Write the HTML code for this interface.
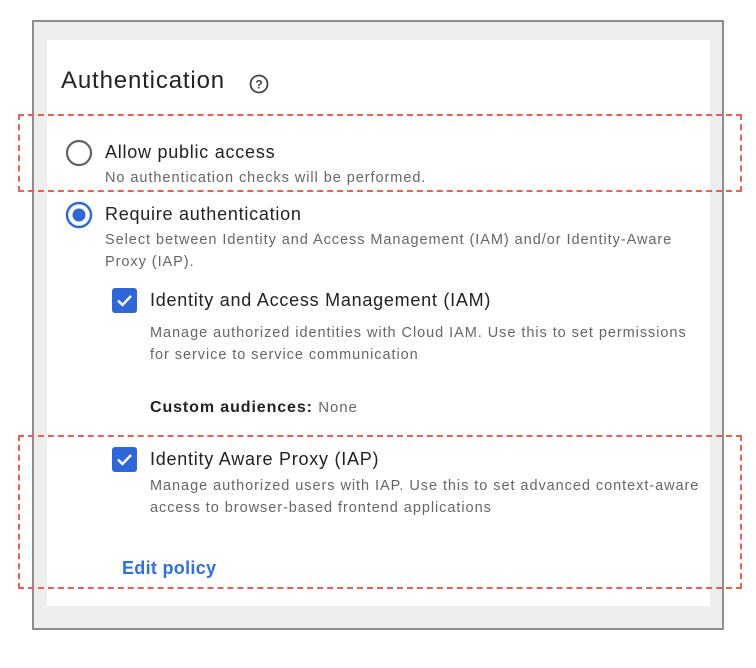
<!DOCTYPE html>
<html><head><meta charset="utf-8"><style>
body{margin:0;width:756px;height:668px;background:#fff;position:relative;font-family:"Liberation Sans",Arial,sans-serif;overflow:hidden}
.a{position:absolute;white-space:nowrap}
.outer{left:32px;top:20px;width:688px;height:606px;background:#eee;border:2px solid #8e8e8e;border-top-width:2px}
.inner{left:47px;top:40px;width:663px;height:566px;background:#fff}
.dash{border:2px dashed #ee5e52;}
.t{color:#222;font-size:18px;letter-spacing:0.75px}
.s{color:#666;font-size:14.5px;line-height:22px;letter-spacing:0.95px}
.cb{width:25px;height:25px;background:#2f67d9;border-radius:3px}
</style></head><body>
<div class="a outer"></div>
<div class="a inner"></div>
<div class="a" style="left:61px;top:67px;font-size:24px;color:#222;letter-spacing:0.85px">Authentication</div>
<svg class="a" style="left:248px;top:73px" width="22" height="22" viewBox="0 0 22 22"><circle cx="11" cy="11" r="8.5" fill="none" stroke="#444" stroke-width="1.8"/><text x="11" y="15.5" font-size="12" text-anchor="middle" fill="#444" font-family="Liberation Sans" font-weight="bold">?</text></svg>
<svg class="a" style="left:65px;top:139px" width="28" height="28"><circle cx="14" cy="14" r="12" fill="none" stroke="#5f6368" stroke-width="2.2"/></svg>
<div class="a t" style="left:105px;top:142px">Allow public access</div>
<div class="a s" style="left:105px;top:167px">No authentication checks will be performed.</div>
<svg class="a" style="left:65px;top:201px" width="28" height="28"><circle cx="14" cy="14" r="12" fill="none" stroke="#2f67d9" stroke-width="2.4"/><circle cx="14" cy="14" r="6.5" fill="#2f67d9"/></svg>
<div class="a t" style="left:105px;top:204px">Require authentication</div>
<div class="a s" style="left:105px;top:229px">Select between Identity and Access Management (IAM) and/or Identity-Aware<br>Proxy (IAP).</div>
<svg class="a cb" style="left:112px;top:288px" viewBox="0 0 25 25"><path d="M6 12.5l4.5 4.5 8.5-9" fill="none" stroke="#fff" stroke-width="2.4"/></svg>
<div class="a t" style="left:150px;top:290px">Identity and Access Management (IAM)</div>
<div class="a s" style="left:150px;top:322px">Manage authorized identities with Cloud IAM. Use this to set permissions<br>for service to service communication</div>
<div class="a" style="left:150px;top:399px;font-size:16px;color:#222;letter-spacing:0.9px"><b>Custom audiences:</b> <span style="color:#666;font-size:15px">None</span></div>
<svg class="a cb" style="left:112px;top:447px" viewBox="0 0 25 25"><path d="M6 12.5l4.5 4.5 8.5-9" fill="none" stroke="#fff" stroke-width="2.4"/></svg>
<div class="a t" style="left:150px;top:449px">Identity Aware Proxy (IAP)</div>
<div class="a s" style="left:150px;top:475px">Manage authorized users with IAP. Use this to set advanced context-aware<br>access to browser-based frontend applications</div>
<div class="a" style="left:122px;top:558px;font-size:18px;color:#2f6fdf;font-weight:bold;letter-spacing:0.3px">Edit policy</div>
<div class="a dash" style="left:18px;top:114px;width:720px;height:74px"></div>
<div class="a dash" style="left:18px;top:435px;width:720px;height:150px"></div>
</body></html>
